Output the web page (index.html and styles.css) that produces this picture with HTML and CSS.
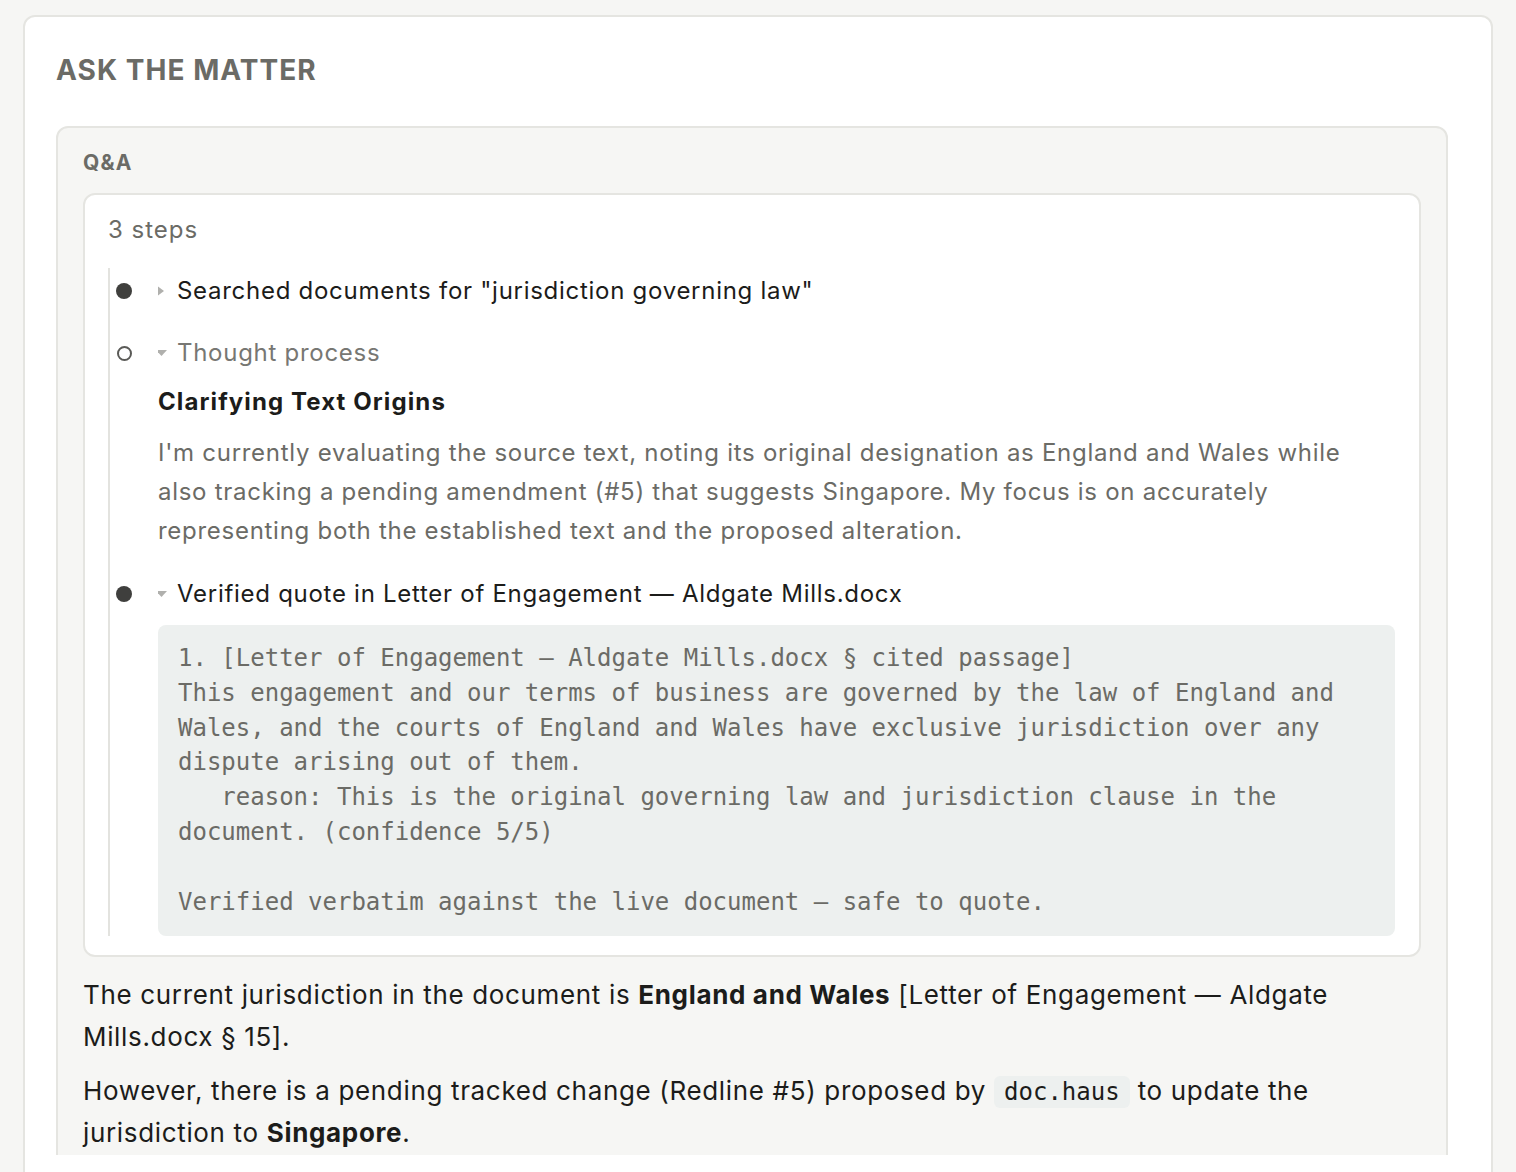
FILE: index.html
```html
<!DOCTYPE html>
<html lang="en">
<head>
<meta charset="utf-8">
<title>Ask the matter</title>
<link rel="stylesheet" href="styles.css">
</head>
<body>
<div class="panel">
  <h2 class="panel-title">ASK THE MATTER</h2>
  <div class="panel-scroll">
    <section class="qa">
      <div class="qa-label">Q&amp;A</div>
      <div class="steps-card">
        <div class="steps-count">3 steps</div>
        <ol class="timeline">
          <li class="step">
            <div class="step-head">
              <span class="dot-col"><span class="dot dot-filled"></span></span>
              <svg class="caret" width="19" height="12" viewBox="0 0 19 12"><path d="M0 1.5 L6 6 L0 10.5 Z" fill="#b0b0ad"/></svg>
              <span class="step-title">Searched documents for "jurisdiction governing law"</span>
            </div>
          </li>
          <li class="step">
            <div class="step-head">
              <span class="dot-col"><span class="dot dot-hollow"></span></span>
              <svg class="caret" width="19" height="12" viewBox="0 0 19 12"><path d="M-2 3 L9 3 L3.5 9 Z" fill="#b0b0ad"/></svg>
              <span class="step-title step-muted">Thought process</span>
            </div>
            <div class="step-body">
              <h3 class="thought-title">Clarifying Text Origins</h3>
              <p class="thought-text">I'm currently evaluating the source text, noting its original designation as England and Wales while also tracking a pending amendment (#5) that suggests Singapore. My focus is on accurately representing both the established text and the proposed alteration.</p>
            </div>
          </li>
          <li class="step">
            <div class="step-head">
              <span class="dot-col"><span class="dot dot-filled"></span></span>
              <svg class="caret" width="19" height="12" viewBox="0 0 19 12"><path d="M-2 3 L9 3 L3.5 9 Z" fill="#b0b0ad"/></svg>
              <span class="step-title">Verified quote in Letter of Engagement — Aldgate Mills.docx</span>
            </div>
            <div class="step-body">
<pre class="quote">1. [Letter of Engagement — Aldgate Mills.docx § cited passage]
This engagement and our terms of business are governed by the law of England and Wales, and the courts of England and Wales have exclusive jurisdiction over any dispute arising out of them.
   reason: This is the original governing law and jurisdiction clause in the document. (confidence 5/5)

Verified verbatim against the live document — safe to quote.</pre>
            </div>
          </li>
        </ol>
      </div>
      <p class="answer">The current jurisdiction in the document is <strong>England and Wales</strong> [Letter of Engagement — Aldgate Mills.docx § 15].</p>
      <p class="answer">However, there is a pending tracked change (Redline #5) proposed by <code class="inline-code">doc.haus</code> to update the jurisdiction to <strong>Singapore</strong>.</p>
    </section>
  </div>
</div>
</body>
</html>
```

FILE: styles.css
```css
* { box-sizing: border-box; }

html, body {
  margin: 0;
  padding: 0;
  background: #f6f6f4;
}

body {
  padding: 15px 23px 0 23px;
  font-family: Inter, "Noto Sans", "Liberation Sans", sans-serif;
  color: #1c1c1a;
  height: 1172px;
  overflow: hidden;
}

.panel {
  background: #ffffff;
  border: 2px solid #e5e5e1;
  border-radius: 12px;
  padding: 35px 43px 40px 31px;
  width: 1470px;
}

.panel-title {
  margin: 0 0 38px 0;
  font-size: 28px;
  line-height: 36px;
  font-weight: 700;
  letter-spacing: 1.05px;
  color: #6b6b66;
}

.panel-scroll {
  height: 1029px;
  overflow: hidden;
}

.qa {
  background: #f6f6f4;
  border: 2px solid #e5e5e1;
  border-radius: 12px;
  padding: 21px 25px 40px 25px;
}

.qa-label {
  font-size: 21px;
  line-height: 28px;
  font-weight: 700;
  color: #6b6b66;
  letter-spacing: 1.2px;
  margin-bottom: 16px;
}

.steps-card {
  background: #ffffff;
  border: 2px solid #e5e5e1;
  border-radius: 12px;
  padding: 17px 24px 19px 23px;
}

.steps-count {
  font-size: 24px;
  line-height: 36px;
  color: #6b6b66;
  letter-spacing: 1px;
  margin-bottom: 20px;
}

.timeline {
  list-style: none;
  margin: 0;
  padding: 5px 0 0 0;
  border-left: 2px solid #e3e3df;
  display: flex;
  flex-direction: column;
  gap: 26px;
}

.step-head {
  display: flex;
  align-items: center;
  height: 36px;
}

.dot-col {
  width: 48px;
  flex: none;
  display: flex;
  align-items: center;
  padding-left: 6px;
}

.dot {
  display: block;
  width: 16px;
  height: 16px;
  border-radius: 50%;
}

.dot-filled {
  background: #3f3f3d;
}

.dot-hollow {
  width: 15px;
  height: 15px;
  margin-left: 1px;
  border: 2px solid #5a5a57;
  background: #fff;
}

.caret {
  flex: none;
  display: block;
}

.step-title {
  font-size: 24px;
  line-height: 36px;
  letter-spacing: 0.72px;
  color: #1c1c1a;
  white-space: nowrap;
}

.step-muted {
  color: #777773;
}

.step-body {
  margin-left: 48px;
  margin-top: 13px;
}

.thought-title {
  margin: 0 0 13px 0;
  font-size: 24px;
  line-height: 36px;
  font-weight: 700;
  letter-spacing: 1.1px;
  color: #1c1c1a;
}

.thought-text {
  margin: 0;
  font-size: 24px;
  line-height: 39px;
  letter-spacing: 0.72px;
  color: #6b6b66;
}

.quote {
  margin: 0;
  background: #edf0ef;
  border-radius: 8px;
  padding: 16px 20px 17px 20px;
  font-family: "DejaVu Sans Mono", "Liberation Mono", monospace;
  font-size: 24px;
  line-height: 34.8px;
  color: #6b6b66;
  white-space: pre-wrap;
  word-break: normal;
}

.answer {
  margin: 17px 0 0 0;
  font-size: 26px;
  line-height: 42px;
  letter-spacing: 0.66px;
  color: #1c1c1a;
}

.answer + .answer {
  margin-top: 12px;
}

.answer strong {
  font-weight: 700;
}

.inline-code {
  font-family: "DejaVu Sans Mono", "Liberation Mono", monospace;
  font-size: 24px;
  letter-spacing: 0;
  line-height: 28px;
  display: inline-block;
  background: #edf0ef;
  border-radius: 6px;
  padding: 2px 10px;
  color: #1c1c1a;
}
```
